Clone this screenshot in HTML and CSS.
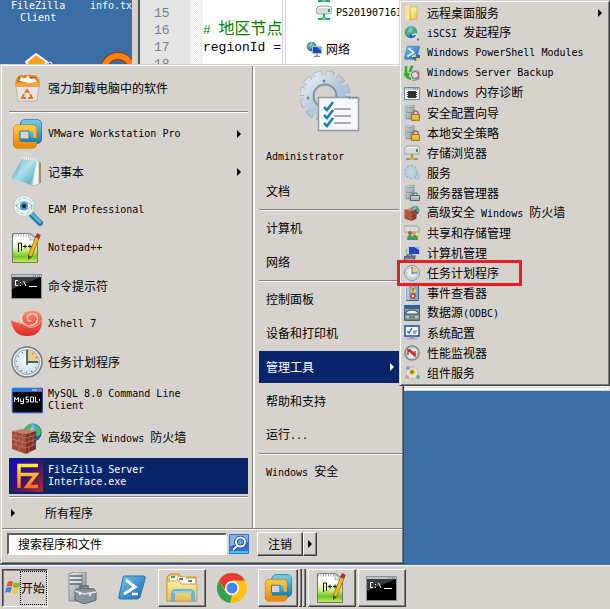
FILE: index.html
```html
<!DOCTYPE html>
<html lang="zh-CN">
<head>
    <meta charset="UTF-8">
    <meta name="viewport" content="width=device-width, initial-scale=1.0">
    <title>开始菜单</title>
    <link rel="stylesheet" href="styles.css">
</head>
<body>
    <svg class="sprite" aria-hidden="true">
        <defs>
            <linearGradient id="g-orange" x1="0" y1="0" x2="0" y2="1"><stop offset="0" stop-color="#ffc53d"/><stop offset="1" stop-color="#ef8a0c"/></linearGradient>
            <linearGradient id="g-blue" x1="0" y1="0" x2="0" y2="1"><stop offset="0" stop-color="#6cc6e4"/><stop offset="1" stop-color="#1f86ae"/></linearGradient>
            <linearGradient id="g-paper" x1="0" y1="0" x2="1" y2="1"><stop offset="0" stop-color="#4f9fb5"/><stop offset=".5" stop-color="#9fdbe6"/><stop offset="1" stop-color="#4ba5b9"/></linearGradient>
            <linearGradient id="g-green" x1="0" y1="0" x2="0" y2="1"><stop offset=".3" stop-color="#fff"/><stop offset=".55" stop-color="#d5f08a"/><stop offset=".8" stop-color="#6cc622"/><stop offset="1" stop-color="#d8ef60"/></linearGradient>
            <linearGradient id="g-fz" x1="0" y1="0" x2="1" y2="1"><stop offset="0" stop-color="#1400e0"/><stop offset=".5" stop-color="#3b1470"/><stop offset="1" stop-color="#b02a28"/></linearGradient>
            <linearGradient id="g-fzt" x1="0" y1="0" x2="0" y2="1"><stop offset="0" stop-color="#ffec40"/><stop offset="1" stop-color="#ff6a1c"/></linearGradient>
            <linearGradient id="g-ps" x1="0" y1="0" x2="1" y2="1"><stop offset="0" stop-color="#7cc4ea"/><stop offset="1" stop-color="#0f66b4"/></linearGradient>
            <linearGradient id="g-steel" x1="0" y1="0" x2="1" y2="1"><stop offset="0" stop-color="#e9edf0"/><stop offset="1" stop-color="#78848c"/></linearGradient>
            <linearGradient id="g-gear" x1="0" y1="0" x2="1" y2="1"><stop offset="0" stop-color="#e2ebf2"/><stop offset=".5" stop-color="#b9cad8"/><stop offset="1" stop-color="#98c2e4"/></linearGradient>
            <linearGradient id="g-folder" x1="0" y1="0" x2="0" y2="1"><stop offset="0" stop-color="#fdf0a8"/><stop offset="1" stop-color="#e7bf52"/></linearGradient>
            <linearGradient id="g-red" x1="0" y1="0" x2="0" y2="1"><stop offset="0" stop-color="#ff8a78"/><stop offset="1" stop-color="#dd2a22"/></linearGradient>
            <radialGradient id="g-globe" cx=".4" cy=".3" r=".8"><stop offset="0" stop-color="#a6dcff"/><stop offset=".5" stop-color="#2f86d0"/><stop offset="1" stop-color="#0c3f8c"/></radialGradient>
            <radialGradient id="g-face" cx=".5" cy=".4" r=".6"><stop offset="0" stop-color="#fff"/><stop offset="1" stop-color="#c3dcec"/></radialGradient>
        </defs>

        <symbol id="i-bin" viewBox="0 0 32 32">
            <path d="M5 14h23l-2 15H7z" fill="#e4e4e8" stroke="#b4b4ba"/>
            <path d="M6 5l3-2h15l3 2 2 6v4H4v-4z" fill="#e98a1d"/>
            <path d="M8 5h17l1 5H7z" fill="#a85a10"/>
            <path d="M8 9l2-4 4 1 3-2 3 3 4-1 2 4-8 1z" fill="#fff"/>
            <path d="M4 11h25v4H4z" fill="#f6a437"/>
            <path d="M14 21l2-3 2 3M19 22l2 4h-4M15 26h-4l2-4" fill="none" stroke="#dc7a28" stroke-width="2"/>
        </symbol>
        <symbol id="i-vmware" viewBox="0 0 32 32">
            <rect x="12.500" y="4.500" width="15" height="18" rx="2" fill="none" stroke="#176a8c" stroke-width="7"/>
            <rect x="12.500" y="4.500" width="15" height="18" rx="2" fill="none" stroke="url(#g-blue)" stroke-width="6"/>
            <rect x="5.500" y="10" width="17" height="17" rx="1" fill="none" stroke="#b96f08" stroke-width="7"/>
            <rect x="5.500" y="10" width="17" height="17" rx="1" fill="none" stroke="url(#g-orange)" stroke-width="6"/>
            <path d="M10 22h10M20 13v9h7" fill="none" stroke="url(#g-blue)" stroke-width="4"/>
            <path d="M9 13h9v8H9z" fill="#d9d6d0" stroke="#2a7e9c"/>
        </symbol>
        <symbol id="i-notebook" viewBox="0 0 32 32">
            <path d="M27 5l3 2v20l-5 1z" fill="#a98d52"/>
            <path d="M25 3l3 3 0 22-7 2z" fill="#eef6f8" stroke="#8fa9b0" stroke-width=".6"/>
            <path d="M11 3l15 2-6 24L0 22z" fill="url(#g-paper)"/>
            <path d="M11 3l15 2-5 3L6 22z" fill="#fff" opacity=".25"/>
            <path d="M11 2l16 2" stroke="#eee" stroke-width="3" stroke-dasharray="1 1"/>
        </symbol>
        <symbol id="i-eye" viewBox="0 0 32 32">
            <path d="M20 20l9 9" stroke="#2c7ba8" stroke-width="6" stroke-linecap="round"/>
            <path d="M21 20l8 8" stroke="#58b4de" stroke-width="3" stroke-linecap="round"/>
            <circle cx="13" cy="12" r="10.500" fill="#eef2f2" stroke="#c2c6c6"/>
            <circle cx="13" cy="12" r="8" fill="none" stroke="#7fcfbd" stroke-dasharray="4 2"/>
            <path d="M5 12q8-9 16 0q-8 8-16 0" fill="#fff" stroke="#758c98" stroke-width=".7"/>
            <circle cx="13" cy="12" r="4" fill="#3d95bd"/><circle cx="13" cy="12" r="2" fill="#102038"/>
        </symbol>
        <symbol id="i-npp" viewBox="0 0 32 32">
            <path d="M1.500 1.500h18l7 6v23h-25z" fill="url(#g-green)" stroke="#6d7868"/>
            <path d="M2 3h18" stroke="#aaa" stroke-width="3" stroke-dasharray="1 1.500"/>
            <path d="M19 2v6h7z" fill="#e4e6e2" stroke="#999" stroke-width=".7"/>
            <path d="M7.500 20v-9h3v8M12 14.500h4M14 12.500v4M17 14.500h4M19 12.500v4" fill="none" stroke="#111"/>
            <path d="M19 24l8-20" stroke="#9a6810" stroke-width="4.500"/>
            <path d="M19 24l8-20" stroke="#f2b92c" stroke-width="3"/>
            <path d="M17 28l0-5 4 2z" fill="#5b4428"/><path d="M26 6l2-4" stroke="#b8313c" stroke-width="4"/>
        </symbol>
        <symbol id="i-cmd" viewBox="0 0 32 32">
            <rect x=".5" y="4.500" width="30" height="24" fill="#000" stroke="#87919b"/>
            <path d="M1 5h29v2H1z" fill="#b8c4d0"/><path d="M22 6h7" stroke="#536a84" stroke-dasharray="1 1"/>
            <path d="M1 7h29L1 19z" fill="#3b3b3b"/>
            <path d="M7 10.500H4.500v5H7M9.500 12v1M9.500 15v1M12.500 11l2.500 5M18 16.500h8" fill="none" stroke="#fff"/>
        </symbol>
        <symbol id="i-xshell" viewBox="0 0 32 32">
            <path d="M0 12c1 11 8 17 17 16 9 0 15-6 14-18-1-6-7-9-13-7-6 1-9 8-5 12-5 0-10-1-13-3z" fill="url(#g-red)"/>
            <path d="M11 6c-3 8 4 14 11 11 7-3 5-12-1-11-6 0-6 8-1 7" fill="none" stroke="#ffd0c4" stroke-width="1.400"/>
            <path d="M0 12c6 3 9 2 14 5 4 4 12 3 17-5" fill="none" stroke="#ffaa98"/>
        </symbol>
        <symbol id="i-clock" viewBox="0 0 32 32">
            <circle cx="16" cy="16" r="15" fill="#eee" stroke="#737a80" stroke-width="1.500"/>
            <circle cx="16" cy="16" r="12.500" fill="url(#g-face)" stroke="#99a5ad"/>
            <path d="M16 16V4a12 12 0 0 1 12 12z" fill="#f0cc86"/>
            <circle cx="16" cy="16" r="10.500" fill="none" stroke="#617484" stroke-width="1.500" stroke-dasharray="1 4.500"/>
            <path d="M16 4v12h11M16 16v3" fill="none" stroke="#41627e" stroke-width="1.800"/>
        </symbol>
        <symbol id="i-mysql" viewBox="0 0 32 32">
            <rect x="1.500" y="4.500" width="30" height="24" rx="1" fill="#000" stroke="#2457a6" stroke-width="1.500"/>
            <path d="M1 4h30v4H1z" fill="#2677da"/><path d="M21 5h5v2h-5z" fill="#78b6ff"/><path d="M27 5h3v2h-3z" fill="#f2603c"/>
            <path d="M3.500 18v-5l2 3 2-3v5M9.500 14.500v3h3M12.500 14.500v5h-3M17.500 13h-2.500v2.500h2.500v2.500H15M19.500 13h3v5h-3zM24.500 13v5h2.500M28 15l1 1-1 1" fill="none" stroke="#fff"/>
        </symbol>
        <symbol id="i-globe" viewBox="0 0 32 32">
            <circle cx="16" cy="16" r="14" fill="url(#g-globe)"/>
            <path d="M8 6c5-5 9-2 6 3-2 3-6 3-6 7 5 2 6 5 2 10C4 22 2 12 8 6zM20 5c6 1 9 7 9 11-2 6-5 7-7 3-1-5 1-7-3-9z" fill="#4fbb4c"/>
        </symbol>
        <symbol id="i-firewall" viewBox="0 0 32 32">
            <use href="#i-globe" x="11" y="0" width="21" height="21"/>
            <path d="M1 9l14 3v20L1 27z" fill="#a44a38"/><path d="M15 12l10-3v18l-10 5z" fill="#7b3024"/>
            <path d="M1 9l10-2 14 2-10 3z" fill="#ca7b64"/>
            <path d="M1 13l14 3 10-3M1 17l14 4 10-4M1 22l14 4 10-4M5 10v4M11 11v4M3 14v4M8 16v3M12 17v3M5 18v5M11 20v5M8 24v5M19 11v4M22 14v4M18 16v4M22 18v5M18 25v5" fill="none" stroke="#cf8a74" stroke-width=".6"/>
        </symbol>
        <symbol id="i-filezilla" viewBox="0 0 32 32">
            <path d="M0 0h32v32H0z" fill="url(#g-fz)"/>
            <path d="M8 28V5.500h19M8 14.500h17L16 26.500h11" fill="none" stroke="url(#g-fzt)" stroke-width="3.500"/>
        </symbol>
        <symbol id="i-search" viewBox="0 0 20 20">
            <path d="M0 0h20v20H0z" fill="#2f74d8"/><path d="M1 1h18v7L1 12z" fill="#7db2f2"/><path d="M1 17h18v2H1z" fill="#48c6ff"/>
            <path d="M9 11l-5 5" stroke="#173d94" stroke-width="4"/>
            <circle cx="11.500" cy="8" r="4.500" fill="#5b9cee" stroke="#173d94" stroke-width="3.500"/>
            <path d="M9 11l-5 5" stroke="#fff" stroke-width="2"/><circle cx="11.500" cy="8" r="4.500" fill="none" stroke="#fff" stroke-width="2"/>
        </symbol>
        <symbol id="i-settings" viewBox="0 0 60 62">
            <circle cx="25" cy="26" r="21" fill="none" stroke="#8ba2b3" stroke-width="9" stroke-dasharray="7.400 3.595"/>
            <circle cx="25" cy="26" r="21" fill="none" stroke="url(#g-gear)" stroke-width="8" stroke-dasharray="6.600 4.395" stroke-dashoffset="-.4"/>
            <circle cx="25" cy="26" r="16" fill="none" stroke="url(#g-gear)" stroke-width="10"/>
            <circle cx="25" cy="26" r="11.500" fill="none" stroke="#8195a5" stroke-width="2"/>
            <circle cx="24" cy="11" r="1.500" fill="#708698"/><circle cx="8" cy="28" r="1.500" fill="#708698"/>
            <path d="M18.500 27.500h40v33h-40z" fill="#f6f6fb" stroke="#9297a5" stroke-width="1.500"/>
            <path d="M49 28h9" stroke="#606678" stroke-dasharray="2 1"/>
            <path d="M34 39h17M34 46h17M34 53h17" stroke="#8c90ad" stroke-width="1.500"/>
            <path d="M24 37l3 3 6-8M24 45l3 3 6-8M24 53l3 3 6-8" fill="none" stroke="#197db7" stroke-width="2.500"/>
        </symbol>
        <symbol id="i-folder" viewBox="0 0 16 16">
            <path d="M1 1l5-1v14l-5 1z" fill="#f9e58d"/><path d="M6 2h7v12l-7 1z" fill="url(#g-folder)" stroke="#d6ae47" stroke-width=".7"/><path d="M9 3v11M4 2v12" stroke="#fff1b0"/>
        </symbol>
        <symbol id="i-iscsi" viewBox="0 0 16 16">
            <use href="#i-globe" width="14" height="14"/><path d="M8 10l4-1 2 2-2 3M11 12l3 3" fill="none" stroke="#dce4e8" stroke-width="1.500"/><path d="M13 14l2 1" stroke="#66777c" stroke-width="2"/>
        </symbol>
        <symbol id="i-shell" viewBox="0 0 28 28">
            <path d="M6 2h20q2 0 1 3l-5 18q-1 2-3 2H2q-2 0-1-3L5 4q0-2 1-2z" fill="url(#g-ps)" stroke="#2878b4"/>
            <path d="M8 6l9 7L6 20" fill="none" stroke="#fff" stroke-width="3"/><path d="M14 20h6" stroke="#fff" stroke-width="2.500"/>
        </symbol>
        <symbol id="i-shellmod" viewBox="0 0 16 16">
            <use href="#i-shell" width="16" height="16"/><path d="M9 10l3-1 4 1q0 4-4 6-3-2-3-6z" fill="#f5c52e"/><path d="M12 9l4 1v3h-4zM9 12h3v4q-3-1-3-4z" fill="#2c68c6"/>
        </symbol>
        <symbol id="i-backup" viewBox="0 0 16 16">
            <path d="M8 5l7 1v8l-6 2z" fill="url(#g-steel)" stroke="#777" stroke-width=".5"/><circle cx="11" cy="10" r="3.500" fill="#ddd" stroke="#666"/><path d="M13 7l2 1v4z" fill="#c85252"/>
            <path d="M2 1v7q0 4 5 6M9 1q-3 2-3 6M0 8l3 4 2-4" fill="none" stroke="#35ac2c" stroke-width="2.500"/>
        </symbol>
        <symbol id="i-memory" viewBox="0 0 16 16">
            <path d="M.5 2.500h15v12H.5z" fill="#f8f8f8" stroke="#7a8797"/><path d="M1 3h14v2H1z" fill="#bdc9d8"/><path d="M9 4h6" stroke="#49668e" stroke-dasharray="1 1"/>
            <path d="M4 6h8v7H4z" fill="#333"/><path d="M3 7.500h10M3 9.500h10M3 11.500h10" stroke="#444" stroke-dasharray="1 8"/>
        </symbol>
        <symbol id="i-tower" viewBox="0 0 16 16">
            <path d="M2 1l2-1h6v14H2z" fill="url(#g-steel)" stroke="#76858d" stroke-width=".7"/><path d="M3 3h5M3 5h5M3 7h5" stroke="#4f6878"/><path d="M3 4h5M3 6h5" stroke="#fff" stroke-width=".7"/><path d="M8 10h1" stroke="#38a44c"/>
        </symbol>
        <symbol id="i-secure" viewBox="0 0 16 16">
            <use href="#i-tower" width="16" height="16"/><path d="M9 10V8q0-2 2.500-2T14 8v2" fill="none" stroke="#8b7754" stroke-width="1.500"/><path d="M7.500 9.500h8v6h-8z" fill="#e2ab2c" stroke="#aa7817"/><path d="M9 11h5M9 13h5" stroke="#ffe681" stroke-width=".7"/>
        </symbol>
        <symbol id="i-drive" viewBox="0 0 16 16">
            <path d="M1 3l2-2h11l2 2v5l-2 1H2L0 8V4z" fill="#d8dade" stroke="#828690" stroke-width=".7"/><path d="M2 3l1-1h10l1 1z" fill="#fafafa"/><path d="M13 4v3" stroke="#28a832" stroke-width="2"/><path d="M8 9v4M2 14h12" stroke="#7b858d" stroke-width="1.500"/><path d="M6 12h4v3H6z" fill="#e3a920"/>
        </symbol>
        <symbol id="i-netdrive" viewBox="0 0 16 16">
            <use href="#i-drive" width="16" height="16"/><path d="M8 9v4M2 14h12" stroke="#23a663" stroke-width="2"/><path d="M6 12h4v3H6z" fill="#5ad090"/>
        </symbol>
        <symbol id="i-gears" viewBox="0 0 16 16">
            <circle cx="7" cy="7" r="5" fill="none" stroke="#8eb4d4" stroke-width="4" stroke-dasharray="2.200 1"/><circle cx="7" cy="7" r="4.500" fill="none" stroke="#b5d3e8" stroke-width="2.500"/><circle cx="13" cy="12" r="2" fill="none" stroke="#a0bdd2" stroke-width="2" stroke-dasharray="1.200 .6"/>
        </symbol>
        <symbol id="i-manager" viewBox="0 0 16 16">
            <use href="#i-tower" width="16" height="16"/><path d="M9 10V8h4v2" fill="none" stroke="#5c6a74"/><path d="M6.500 10.500h9v5h-9z" fill="#a7b5be" stroke="#596972"/><path d="M7 12h8" stroke="#dce5e9"/>
        </symbol>
        <symbol id="i-share" viewBox="0 0 16 16">
            <path d="M9 4h6v10H6z" fill="url(#g-folder)"/><path d="M1 1h12l2 2v4H0V2z" fill="#dcdcdf" stroke="#888" stroke-width=".7"/><circle cx="6" cy="8" r="2" fill="#9c6b3c"/><circle cx="10" cy="8" r="2" fill="#d79a68"/><path d="M3 15q0-5 3-5t3 5zM8 15q0-5 3-5t3 5z" fill="#3b9b73"/>
        </symbol>
        <symbol id="i-computer" viewBox="0 0 16 16">
            <path d="M4.500 1.500h11v8h-11z" fill="#2446b8" stroke="#c7ccd5"/><path d="M10 2h5v3z" fill="#94b1ff"/><path d="M1 4h3v7H1z" fill="#bdc8d0"/><path d="M8 10h4v3H8z" fill="#8a94a0"/><path d="M.5 11.500h10v4H.5z" fill="#a6b3bc" stroke="#506470"/><path d="M3 11v-1h5v1M1 13h9" fill="none" stroke="#33444c"/><path d="M2 6h1" stroke="#35c63f" stroke-width="2"/>
        </symbol>
        <symbol id="i-events" viewBox="0 0 16 16">
            <path d="M2.500.500h12v15h-12z" fill="#85a8d7" stroke="#37659f"/><path d="M1 2h4M1 4h4M1 6h4M1 8h4M1 10h4M1 12h4M1 14h4" stroke="#e5effb"/><path d="M9 1l4 6H6z" fill="#f4ce2e"/><path d="M9 3v3" stroke="#5b4200"/><circle cx="9" cy="11" r="3" fill="#dd4234"/><path d="M8 10l2 2M10 10l-2 2" stroke="#fff"/>
        </symbol>
        <symbol id="i-odbc" viewBox="0 0 16 16">
            <path d="M.5.500h15v15H.5z" fill="#8fa0ac" stroke="#4b6578"/><path d="M0 0h16v4H0z" fill="#315f9b"/><path d="M2 7q6-4 12 0v2H2z" fill="#f0f3f4" stroke="#444"/><path d="M1 10h14v4H1z" fill="#bdc9d0" stroke="#53646c"/><path d="M5 12h6" stroke="#333"/>
        </symbol>
        <symbol id="i-config" viewBox="0 0 16 16">
            <path d="M1 1h14v10H1z" fill="#fff" stroke="#1644b6" stroke-width="1.400"/><path d="M3 6l2 2 3-5" fill="none" stroke="#178ed0" stroke-width="1.500"/><path d="M9 6h4M9 8h3" stroke="#555"/><path d="M6 12h4v1H6zM3 14h10" fill="#999" stroke="#999"/>
        </symbol>
        <symbol id="i-perf" viewBox="0 0 16 16">
            <circle cx="8" cy="8" r="7" fill="#fff" stroke="#7a8587" stroke-width="1.500"/><circle cx="8" cy="8" r="5.500" fill="#edf3ed" stroke="#b4bdb8"/><path d="M4 10V5l7 6V6M5 4l7 6" fill="none" stroke="#d42a30" stroke-width="1.500"/>
        </symbol>
        <symbol id="i-component" viewBox="0 0 16 16">
            <circle cx="8" cy="8" r="6" fill="#e6e6ea" stroke="#b8b8bc"/><circle cx="8" cy="7" r="3" fill="#f0c63c"/><path d="M6 7h4M8 5v4" stroke="#816015"/><circle cx="4" cy="3" r="2" fill="#8c97de"/><circle cx="3" cy="12" r="2" fill="#e0949e"/><circle cx="14" cy="12" r="2" fill="#68ba72"/>
        </symbol>
        <symbol id="i-network" viewBox="0 0 16 16">
            <use href="#i-globe" width="11" height="11"/><path d="M6.500 5.500h9v7h-9z" fill="#1746bd" stroke="#aebbd0"/><path d="M11 6h4v4z" fill="#7da4f5"/><path d="M11 13v2M8 15.500h6" stroke="#7c8997" stroke-width="1.500"/>
        </symbol>
        <symbol id="i-flag" viewBox="0 0 16 16">
            <path d="M3 2q3-2 5 0L7 7Q4 5 1 7z" fill="#e7572c"/><path d="M9 2q3 2 7 0l-2 5q-3 2-6 0z" fill="#82b93b"/><path d="M1 8q3-2 6 0l-2 5q-2-2-5 0z" fill="#3d82d4"/><path d="M8 8q3 2 6 0l-2 5q-3 2-5 0z" fill="#f8c72c"/>
        </symbol>
        <symbol id="i-server" viewBox="0 0 32 32">
            <path d="M3 2l5-2h12v26l-5 3H3z" fill="url(#g-steel)" stroke="#84898c"/><path d="M4 4h12M4 8h12M4 12h12" stroke="#626b70" stroke-width="1.500"/><path d="M4 6h12M4 10h12" stroke="#fff"/><path d="M16 2v26" stroke="#777"/>
            <path d="M14 17v-3h8v3" fill="none" stroke="#5a6770" stroke-width="1.500"/><path d="M9 18l5-2 14 1 2 3v8l-12 4-9-4z" fill="#84939c" stroke="#56646c"/><path d="M9 19l9 3 12-2" fill="none" stroke="#d9e0e3" stroke-width="1.500"/><path d="M14 20v3M24 21v3" stroke="#eee" stroke-width="2"/>
        </symbol>
        <symbol id="i-explorer" viewBox="0 0 32 32">
            <path d="M1 5l3-3h9l2 3h15v24H1z" fill="#eec75f" stroke="#b99338"/><path d="M4 4h7v7H4z" fill="#fff"/><path d="M5 4h4v2H5z" fill="#35a644"/><path d="M12 5h8v7h-8z" fill="#fff"/><path d="M13 6h4v2h-4z" fill="#d44a37"/><path d="M20 7h9v7h-9z" fill="#fff"/><path d="M22 8h4v2h-4z" fill="#3784d2"/>
            <path d="M1 9h12l2 3h16v17H1z" fill="url(#g-folder)" stroke="#caa344"/><path d="M7 30v-8q0-3 3-3h14q3 0 3 3v8" fill="none" stroke="#6bb3df" stroke-width="4"/><path d="M7 20h19" stroke="#d2ecf9"/>
        </symbol>
        <symbol id="i-chrome" viewBox="0 0 30 30">
            <circle cx="15" cy="15" r="15" fill="#fbc116"/><path d="M2 7.500A15 15 0 0 1 28 7.500H15l-7 9z" fill="#e33b2e"/><path d="M2 7.500l6.500 11.300q2.500 3.500 6.500 3.700L13 30A15 15 0 0 1 2 7.500z" fill="#31a350"/><circle cx="15" cy="15" r="7" fill="#fff"/><circle cx="15" cy="15" r="5.500" fill="#4285f4"/>
        </symbol>
    </svg>

    <main class="desktop">
        <div class="shortcut shortcut-filezilla latin">FileZilla<br>Client</div>
        <div class="shortcut shortcut-info latin">info.txt</div>
        <svg class="peek" viewBox="0 0 132 16" aria-hidden="true">
            <path d="M36 4l11 8-4 5H30l-4-5z" fill="#f9a01b" stroke="#fff" stroke-width="2"/>
            <circle cx="50" cy="14" r="2" fill="none" stroke="#fff"/>
            <circle cx="118" cy="20" r="14" fill="none" stroke="#8b3a10" stroke-width="8"/>
            <circle cx="118" cy="20" r="14" fill="none" stroke="#ff7f0e" stroke-width="6"/>
        </svg>

        <section class="editor" aria-label="编辑器">
            <div class="gutter">15<br>16<br>17<br>18</div>
            <div class="fold"></div>
            <pre class="code">
<span class="comment"># <span class="wide">地区节点</span></span>
regionId <span class="op">=</span></pre>
        </section>

        <section class="explorer" aria-label="资源管理器">
            <div class="tree-item deep"><svg class="icon-s"><use href="#i-netdrive"/></svg></div>
            <div class="tree-item deep"><svg class="icon-s"><use href="#i-netdrive"/></svg><span class="latin">PS20190716I</span></div>
            <div class="tree-item tree-net"><svg class="icon-s"><use href="#i-network"/></svg>网络</div>
        </section>

        <nav class="start-menu" aria-label="开始菜单">
            <div class="programs">
                <button class="program"><svg class="icon"><use href="#i-bin"/></svg>强力卸载电脑中的软件</button>
                <hr class="sep sep-top">
                <button class="program"><svg class="icon"><use href="#i-vmware"/></svg><span class="latin">VMware Workstation Pro</span><span class="arrow"></span></button>
                <button class="program"><svg class="icon"><use href="#i-notebook"/></svg>记事本<span class="arrow"></span></button>
                <button class="program"><svg class="icon"><use href="#i-eye"/></svg><span class="latin">EAM Professional</span></button>
                <button class="program"><svg class="icon"><use href="#i-npp"/></svg><span class="latin">Notepad++</span></button>
                <button class="program"><svg class="icon"><use href="#i-cmd"/></svg>命令提示符</button>
                <button class="program"><svg class="icon"><use href="#i-xshell"/></svg><span class="latin">Xshell 7</span></button>
                <button class="program"><svg class="icon"><use href="#i-clock"/></svg>任务计划程序</button>
                <button class="program"><svg class="icon"><use href="#i-mysql"/></svg><span class="latin">MySQL 8.0 Command Line<br>Client</span></button>
                <button class="program"><svg class="icon"><use href="#i-firewall"/></svg><span>高级安全<span class="latin"> Windows </span>防火墙</span></button>
                <button class="program selected"><svg class="icon"><use href="#i-filezilla"/></svg><span class="latin">FileZilla Server<br>Interface.exe</span></button>
                <hr class="sep">
                <button class="all-programs"><span class="arrow"></span>所有程序</button>
            </div>
            <div class="places">
                <svg class="user-pic" aria-hidden="true"><use href="#i-settings"/></svg>
                <button class="place latin">Administrator</button>
                <button class="place">文档</button>
                <hr class="sep">
                <button class="place">计算机</button>
                <button class="place">网络</button>
                <hr class="sep">
                <button class="place">控制面板</button>
                <button class="place">设备和打印机</button>
                <button class="place selected">管理工具<span class="arrow"></span></button>
                <button class="place">帮助和支持</button>
                <button class="place"><span>运行<span class="latin">...</span></span></button>
                <hr class="sep">
                <button class="place"><span><span class="latin">Windows </span>安全</span></button>
            </div>
            <div class="menu-footer">
                <input class="search" type="text" value="搜索程序和文件" aria-label="搜索程序和文件">
                <button class="search-btn" aria-label="搜索"><svg><use href="#i-search"/></svg></button>
                <div class="logoff">
                    <button class="raised logoff-btn">注销</button>
                    <button class="raised logoff-more" aria-label="更多"><span class="arrow"></span></button>
                </div>
            </div>
        </nav>

        <nav class="submenu" aria-label="管理工具">
            <button class="tool"><svg class="icon-s"><use href="#i-folder"/></svg>远程桌面服务<span class="arrow"></span></button>
            <button class="tool"><svg class="icon-s"><use href="#i-iscsi"/></svg><span><span class="latin">iSCSI </span>发起程序</span></button>
            <button class="tool"><svg class="icon-s"><use href="#i-shellmod"/></svg><span class="latin">Windows PowerShell Modules</span></button>
            <button class="tool"><svg class="icon-s"><use href="#i-backup"/></svg><span class="latin">Windows Server Backup</span></button>
            <button class="tool"><svg class="icon-s"><use href="#i-memory"/></svg><span><span class="latin">Windows </span>内存诊断</span></button>
            <button class="tool"><svg class="icon-s"><use href="#i-secure"/></svg>安全配置向导</button>
            <button class="tool"><svg class="icon-s"><use href="#i-secure"/></svg>本地安全策略</button>
            <button class="tool"><svg class="icon-s"><use href="#i-drive"/></svg>存储浏览器</button>
            <button class="tool"><svg class="icon-s"><use href="#i-gears"/></svg>服务</button>
            <button class="tool"><svg class="icon-s"><use href="#i-manager"/></svg>服务器管理器</button>
            <button class="tool"><svg class="icon-s"><use href="#i-firewall"/></svg><span>高级安全<span class="latin"> Windows </span>防火墙</span></button>
            <button class="tool"><svg class="icon-s"><use href="#i-share"/></svg>共享和存储管理</button>
            <button class="tool"><svg class="icon-s"><use href="#i-computer"/></svg>计算机管理</button>
            <button class="tool marked"><svg class="icon-s"><use href="#i-clock"/></svg>任务计划程序</button>
            <button class="tool"><svg class="icon-s"><use href="#i-events"/></svg>事件查看器</button>
            <button class="tool"><svg class="icon-s"><use href="#i-odbc"/></svg><span>数据源<span class="latin">(ODBC)</span></span></button>
            <button class="tool"><svg class="icon-s"><use href="#i-config"/></svg>系统配置</button>
            <button class="tool"><svg class="icon-s"><use href="#i-perf"/></svg>性能监视器</button>
            <button class="tool"><svg class="icon-s"><use href="#i-component"/></svg>组件服务</button>
        </nav>
    </main>

    <footer class="taskbar">
        <button class="start"><svg class="icon-s"><use href="#i-flag"/></svg><span class="start-label">开始</span></button>
        <button class="task" aria-label="服务器管理器"><svg class="icon"><use href="#i-server"/></svg></button>
        <button class="task" aria-label="PowerShell"><svg class="icon-m"><use href="#i-shell"/></svg></button>
        <button class="task raised" aria-label="资源管理器"><svg class="icon"><use href="#i-explorer"/></svg></button>
        <button class="task" aria-label="Chrome"><svg class="icon-l"><use href="#i-chrome"/></svg></button>
        <div class="stack">
            <button class="task raised" aria-label="VMware"><svg class="icon-l"><use href="#i-vmware"/></svg></button>
            <span class="stack-edge"></span>
            <span class="stack-edge"></span>
        </div>
        <button class="task raised" aria-label="Notepad++"><svg class="icon"><use href="#i-npp"/></svg></button>
        <button class="task raised" aria-label="命令提示符"><svg class="icon"><use href="#i-cmd"/></svg></button>
    </footer>
</body>
</html>
```
FILE: styles.css
```css
*,
*::after {
    box-sizing: border-box;
}

body {
    display: flex;
    flex-direction: column;
    height: 100vh;
    margin: 0;
    background-color: #3a6ea5;
    color: #000;
    font-family: "Noto Sans CJK SC", sans-serif;
    font-size: 12px;
    line-height: 12px;
    overflow: hidden;
}

button {
    background: none;
    border: none;
    border-radius: 0;
    padding: 0;
    margin: 0;
    color: inherit;
    font: inherit;
    text-align: left;
    white-space: nowrap;
}

svg {
    display: block;
    flex: none;
}

.sprite {
    position: absolute;
    width: 0;
    height: 0;
}

.latin,
button.latin {
    font-family: "DejaVu Sans Mono", monospace;
    font-size: 10px;
    line-height: 12px;
    white-space: pre;
}

.icon {
    width: 32px;
    height: 32px;
}

.icon-l {
    width: 30px;
    height: 30px;
}

.icon-m {
    width: 28px;
    height: 28px;
}

.icon-s {
    width: 16px;
    height: 16px;
}

.arrow {
    width: 0;
    height: 0;
    border-left: 4px solid currentColor;
    border-top: 4px solid transparent;
    border-bottom: 4px solid transparent;
}

/* desktop and the windows on it */
.desktop {
    position: relative;
    flex: 1;
    overflow: hidden;
}

.shortcut {
    position: absolute;
    top: 0;
    color: #fff;
    text-align: center;
}

.shortcut-filezilla {
    left: 11px;
}

.shortcut-info {
    left: 90px;
}

.peek {
    position: absolute;
    left: 0;
    top: 50px;
    width: 132px;
    height: 16px;
}

.editor {
    position: absolute;
    left: 132px;
    top: 0;
    width: 152px;
    height: 78px;
    display: flex;
    background-color: #fff;
    border-left: 6px solid #d6d3ce;
    box-shadow: inset 2px 0 #555;
    overflow: hidden;
    font-family: "Liberation Mono", "Noto Sans CJK SC", monospace;
    font-size: 13px;
    line-height: 17px;
}

.gutter {
    width: 50px;
    margin-left: 2px;
    padding: 5px 0 0 14px;
    background-color: #e4e4e4;
    color: #808080;
}

.fold {
    width: 13px;
    background: repeating-conic-gradient(#e4e4e4 0 25%, #fff 0 50%) 0 0 / 2px 2px;
}

.code {
    margin: 0;
    padding-top: 22px;
    font: inherit;
}

.comment {
    color: #008000;
}

.wide {
    font-size: 16px;
    line-height: 12px;
}

.op {
    color: #000080;
}

.explorer {
    position: absolute;
    left: 282px;
    right: 0;
    top: 0;
    height: 391px;
    background-color: #fff;
    border: 4px double #d6d3ce;
    border-top: none;
}

.tree-item {
    display: flex;
    align-items: center;
    gap: 4px;
    height: 20px;
    padding-left: 20px;
}

.deep {
    padding-left: 30px;
}

.deep:first-child {
    height: 3px;
    align-items: flex-end;
}

.tree-net {
    margin-top: 16px;
}

/* start menu */
.start-menu {
    position: absolute;
    left: 0;
    bottom: 1px;
    width: 404px;
    display: grid;
    grid-template-columns: 253px 1fr;
    padding: 1px;
    background-color: #d6d3ce;
    border: 1px solid;
    border-color: #d6d3ce #404040 #404040 #d6d3ce;
    box-shadow: inset 1px 1px #fff, inset -1px -1px #808080;
}

.programs {
    display: flex;
    flex-direction: column;
    padding: 3px 5px 0 7px;
    border-right: 2px solid #fff;
    box-shadow: inset -1px 0 #808080;
}

.sep {
    width: 100%;
    height: 2px;
    margin: 1px 0 0;
    border: none;
    border-top: 1px solid #808080;
    border-bottom: 1px solid #fff;
}

.sep-top {
    margin: 4px 0 2px;
}

.program {
    display: flex;
    align-items: center;
    gap: 5px;
    height: 36px;
    margin: 1px 0;
    padding: 0 7px 0 2px;
}

.program .arrow {
    margin-left: auto;
}

.selected {
    background-color: #0a246a;
    color: #fff;
}

.all-programs {
    display: flex;
    align-items: center;
    gap: 30px;
    height: 30px;
    padding-left: 2px;
}

.places {
    display: flex;
    flex-direction: column;
    padding: 4px 0 0 4px;
}

.user-pic {
    width: 60px;
    height: 62px;
    margin: 0 0 8px 41px;
}

.place {
    display: flex;
    align-items: center;
    height: 32px;
    margin: 1px 0;
    padding: 0 8px 0 7px;
}

.place .arrow {
    margin-left: auto;
}

.menu-footer {
    grid-column: 1 / -1;
    display: flex;
    align-items: center;
    gap: 2px;
    height: 34px;
    padding: 0 0 4px 5px;
    border-top: 1px solid #808080;
    box-shadow: inset 0 1px #fff;
}

.search {
    width: 220px;
    height: 22px;
    padding: 0 9px;
    border: 2px solid;
    border-color: #606060 #fff #fff #606060;
    border-radius: 0;
    background-color: #fff;
    font: inherit;
}

.search-btn svg {
    width: 20px;
    height: 20px;
}

.logoff {
    display: flex;
    margin-left: 6px;
}

.raised {
    border: 1px solid;
    border-color: #fff #404040 #404040 #fff;
    box-shadow: inset -1px -1px #808080;
}

.logoff-btn {
    width: 46px;
    height: 24px;
    text-align: center;
}

.logoff-more {
    display: flex;
    align-items: center;
    justify-content: center;
    width: 14px;
    height: 24px;
}

/* administrative tools */
.submenu {
    position: absolute;
    left: 399px;
    right: 0;
    top: 0;
    display: flex;
    flex-direction: column;
    padding: 2px 1px;
    background-color: #d6d3ce;
    border: 1px solid;
    border-color: #d6d3ce #404040 #404040 #d6d3ce;
    box-shadow: inset 1px 1px #fff, inset -1px -1px #808080;
}

.tool {
    display: flex;
    align-items: center;
    gap: 7px;
    height: 20px;
    padding: 0 6px 0 3px;
}

.tool .arrow {
    margin-left: auto;
}

.marked {
    position: relative;
}

.marked::after {
    content: "";
    position: absolute;
    left: -4px;
    top: -3px;
    width: 125px;
    height: 26px;
    border: 3px solid #ed1c24;
}

/* taskbar */
.taskbar {
    display: flex;
    gap: 2px;
    height: 44px;
    padding: 4px 2px 2px;
    background-color: #d6d3ce;
    box-shadow: inset 0 1px #fff;
}

.start {
    display: flex;
    align-items: center;
    width: 46px;
    padding-left: 2px;
    border: 1px solid;
    border-color: #404040 #fff #fff #404040;
    box-shadow: inset 1px 1px #808080;
}

.start-label {
    padding: 10px 0;
    outline: 1px dotted #000;
    width: 25px;
}

.task {
    display: flex;
    align-items: center;
    justify-content: center;
    width: 48px;
}

.start + .task {
    margin-left: 8px;
}

.stack {
    display: flex;
    gap: 1px;
    width: 48px;
}

.stack .task {
    width: 40px;
}

.stack-edge {
    width: 3px;
    border-right: 1px solid #404040;
    border-bottom: 1px solid #404040;
    box-shadow: inset -1px 0 #808080;
}
```
